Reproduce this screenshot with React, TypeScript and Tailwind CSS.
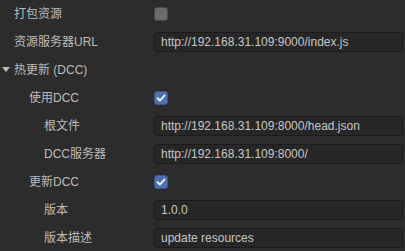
import React from "react";

const font = { fontFamily: '"Liberation Sans", "Noto Sans CJK SC", sans-serif' };

function Check({ checked }: { checked: boolean }) {
  return checked ? (
    <div className="w-[14px] h-[14px] rounded-[3px] bg-[#4f70b3] border border-[#3a5690] flex items-center justify-center">
      <svg width="10" height="8" viewBox="0 0 10 8">
        <path d="M1.5 4.2 L4 6.5 L8.5 1.5" fill="none" stroke="#ffffff" strokeWidth="1.8" strokeLinecap="round" strokeLinejoin="round" />
      </svg>
    </div>
  ) : (
    <div className="w-[14px] h-[14px] rounded-[3px] bg-[#6b6b6b] border border-[#4a4a4a]" />
  );
}

function Input({ value }: { value: string }) {
  return (
    <div className="w-full h-[20px] rounded-[4px] bg-[#272727] border border-[#1c1c1c] px-[6px] flex items-center text-[12px] text-[#c6c6c6]">
      {value}
    </div>
  );
}

function Row({ label, indent, children }: { label: React.ReactNode; indent: number; children?: React.ReactNode }) {
  const pad = indent === 0 ? "pl-[14px]" : indent === 1 ? "pl-[29px]" : "pl-[44px]";
  return (
    <div className="h-[28px] flex items-center">
      <div className={`w-[154px] shrink-0 ${pad} text-[12px] text-[#bcbcbc]`}>{label}</div>
      <div className="flex-1 pr-[2px] flex items-center">{children}</div>
    </div>
  );
}

export default function App() {
  return (
    <div className="w-[405px] h-[251px] bg-[#2c2c2c] overflow-hidden" style={font}>
      <Row label="打包资源" indent={0}><Check checked={false} /></Row>
      <Row label="资源服务器URL" indent={0}><Input value="http://192.168.31.109:9000/index.js" /></Row>
      <div className="h-[28px] flex items-center relative">
        <svg className="absolute left-[2px] top-[11px]" width="8" height="6" viewBox="0 0 8 6">
          <path d="M0 0 L8 0 L4 5 Z" fill="#bcbcbc" />
        </svg>
        <div className="pl-[14px] text-[12px] text-[#bcbcbc]">热更新 (DCC)</div>
      </div>
      <Row label="使用DCC" indent={1}><Check checked /></Row>
      <Row label="根文件" indent={2}><Input value="http://192.168.31.109:8000/head.json" /></Row>
      <Row label="DCC服务器" indent={2}><Input value="http://192.168.31.109:8000/" /></Row>
      <Row label="更新DCC" indent={1}><Check checked /></Row>
      <Row label="版本" indent={2}><Input value="1.0.0" /></Row>
      <Row label="版本描述" indent={2}><Input value="update resources" /></Row>
    </div>
  );
}
